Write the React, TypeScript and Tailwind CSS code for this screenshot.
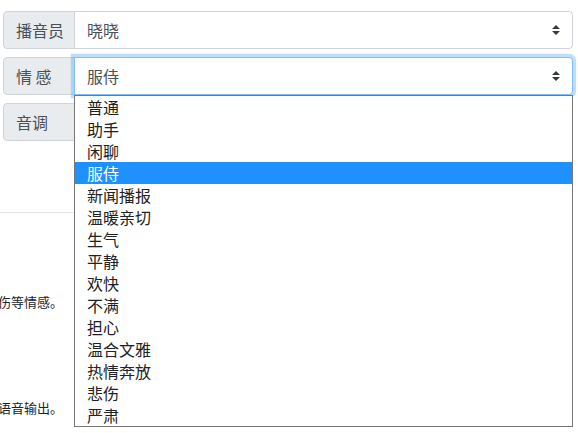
import React from "react";

const font = { fontFamily: '"Noto Sans CJK SC", "Noto Sans", sans-serif' };

function Caret() {
  return (
    <svg
      className="absolute right-3 top-1/2 -translate-y-1/2"
      width="8"
      height="10"
      viewBox="0 0 4 5"
    >
      <path d="M2 0L0 2h4zm0 5L0 3h4z" fill="#343a40" />
    </svg>
  );
}

function Row({
  label,
  value,
  focused,
  children,
}: {
  label: string;
  value: string;
  focused?: boolean;
  children?: React.ReactNode;
}) {
  return (
    <div className="flex h-[38px] w-[570px]">
      <div className="w-[72px] shrink-0 flex items-center px-3 bg-[#e9ecef] border border-[#ced4da] rounded-l text-[#495057] text-base whitespace-pre">
        {label}
      </div>
      <div
        className={
          focused
            ? "relative z-10 flex-1 -ml-px flex items-center pl-3 bg-white border border-[#80bdff] rounded-r text-[#495057] text-base shadow-[0_0_0_0.2rem_rgba(0,123,255,0.25)]"
            : "relative flex-1 -ml-px flex items-center pl-3 bg-white border border-[#ced4da] rounded-r text-[#495057] text-base"
        }
      >
        {value}
        <Caret />
        {children}
      </div>
    </div>
  );
}

const options = [
  "普通",
  "助手",
  "闲聊",
  "服侍",
  "新闻播报",
  "温暖亲切",
  "生气",
  "平静",
  "欢快",
  "不满",
  "担心",
  "温合文雅",
  "热情奔放",
  "悲伤",
  "严肃",
];

export default function App() {
  return (
    <div
      className="relative w-[578px] h-[433px] overflow-hidden bg-white text-[#212529]"
      style={font}
    >
      <div className="flex flex-col gap-2 pt-[11px] pl-[3px]">
        <Row label="播音员" value="晓晓" />
        <Row label="情 感" value="服侍" focused>
          <div className="absolute left-[-1px] right-[-1px] top-[37px] z-20 bg-white border border-[#767676] flex flex-col">
            {options.map((o) => (
              <div
                key={o}
                className={
                  o === "服侍"
                    ? "h-[22px] flex items-center pl-3 bg-[#1e90ff] text-white text-base"
                    : "h-[22px] flex items-center pl-3 text-[#222] text-base"
                }
              >
                {o}
              </div>
            ))}
          </div>
        </Row>
        <Row label="音调" value="" />
      </div>
      <hr className="mt-[71px] w-[573px] border-0 border-t border-[#e5e5e5]" />
      <div className="mt-[80px] w-[63px] h-[18px] flex justify-end items-center whitespace-nowrap text-[13px]">
        可以表达高兴、悲伤等情感。
      </div>
      <div className="mt-[88px] w-[63px] h-[18px] flex justify-end items-center whitespace-nowrap text-[13px]">
        将文本转换为语音输出。
      </div>
    </div>
  );
}
